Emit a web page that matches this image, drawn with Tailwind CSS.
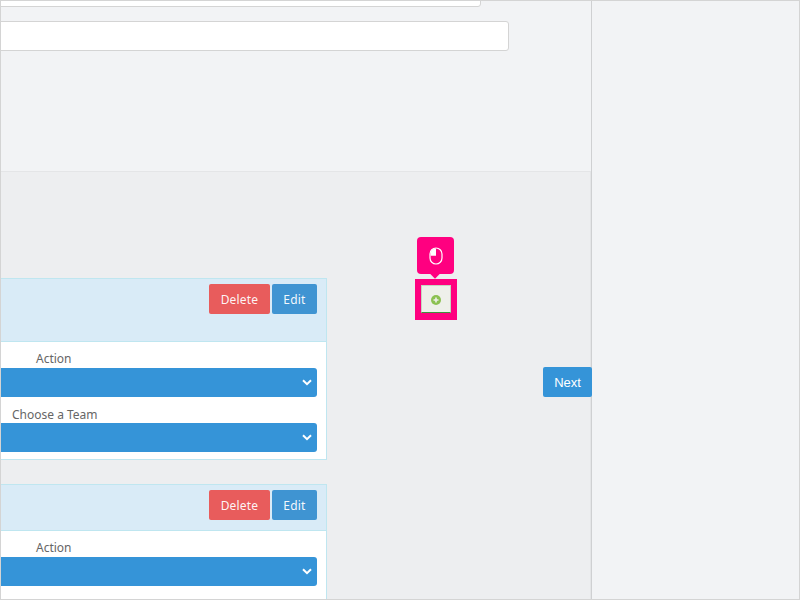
<!DOCTYPE html>
<html>
<head>
<meta charset="utf-8">
<script src="https://cdn.jsdelivr.net/npm/@tailwindcss/browser@4"></script>
</head>
<body class="m-0 bg-[#f2f3f5]">
<div class="relative flex w-[800px] h-[600px] overflow-hidden bg-[#f2f3f5] font-['Noto_Sans','Liberation_Sans',sans-serif]">
  <div class="w-[591px] h-[600px] flex flex-col shrink-0">
    <div class="h-[171px] shrink-0 bg-[#f2f3f5] overflow-hidden">
      <div class="-ml-[10px] w-[491px] h-[7px] bg-white border border-[#d4d4d4] rounded-b-[3px]"></div>
      <div class="-ml-[10px] w-[519px] h-[30px] mt-[14px] bg-white border border-[#d4d4d4] rounded-[3px]"></div>
    </div>
    <div class="relative flex-1 bg-[#edeef0] border-t border-r border-[#e4e5e7] pt-[106px]">
      <section class="w-[327px] h-[182px] bg-white border border-[#bfe6f0] border-l-0">
        <div class="h-[63px] bg-[#d9ebf7] border-b border-[#bfe6f0] flex justify-end gap-[2px] pt-[5px] pr-[9px]">
          <button class="w-[61px] h-[30px] pt-px rounded-[2px] bg-[#e85c5c] text-white/95 text-[12px] tracking-[0.2px]">Delete</button>
          <button class="w-[45px] h-[30px] pt-px rounded-[2px] bg-[#3f94d2] text-white/95 text-[12px] tracking-[0.2px]">Edit</button>
        </div>
        <div class="pr-[9px]">
          <div class="h-[26px] pl-[36px] pt-[9px] text-[12px] leading-[15px] text-[#666]">Action</div>
          <div class="h-[29px] rounded-r-[3px] bg-[#3594d8] flex items-center justify-end pr-[5px]">
            <svg width="10" height="7" viewBox="0 0 10 7" fill="none"><path d="M1 1.2 5 5.2 9 1.2" stroke="#fff" stroke-width="2"/></svg>
          </div>
          <div class="h-[26px] pl-[12px] pt-[10px] text-[12px] leading-[15px] text-[#666]">Choose a Team</div>
          <div class="h-[29px] rounded-r-[3px] bg-[#3594d8] flex items-center justify-end pr-[5px]">
            <svg width="10" height="7" viewBox="0 0 10 7" fill="none"><path d="M1 1.2 5 5.2 9 1.2" stroke="#fff" stroke-width="2"/></svg>
          </div>
        </div>
      </section>
      <section class="w-[327px] h-[200px] mt-[24px] bg-white border border-[#bfe6f0] border-l-0">
        <div class="h-[46px] bg-[#d9ebf7] border-b border-[#bfe6f0] flex justify-end gap-[2px] pt-[5px] pr-[9px]">
          <button class="w-[61px] h-[30px] pt-px rounded-[2px] bg-[#e85c5c] text-white/95 text-[12px] tracking-[0.2px]">Delete</button>
          <button class="w-[45px] h-[30px] pt-px rounded-[2px] bg-[#3f94d2] text-white/95 text-[12px] tracking-[0.2px]">Edit</button>
        </div>
        <div class="pr-[9px]">
          <div class="h-[26px] pl-[36px] pt-[9px] text-[12px] leading-[15px] text-[#666]">Action</div>
          <div class="h-[29px] rounded-r-[3px] bg-[#3594d8] flex items-center justify-end pr-[5px]">
            <svg width="10" height="7" viewBox="0 0 10 7" fill="none"><path d="M1 1.2 5 5.2 9 1.2" stroke="#fff" stroke-width="2"/></svg>
          </div>
        </div>
      </section>

      <!-- tooltip -->
      <div class="absolute left-[417px] top-[65px] w-[37px] h-[37px] rounded-[4px] bg-[#ff0080] flex items-center justify-center">
        <div class="absolute left-[14px] top-[32px] w-[8px] h-[8px] rotate-45 bg-[#ff0080]"></div>
        <svg class="relative" width="14" height="18" viewBox="0 0 14 18" fill="none">
          <rect x="1" y="1" width="12" height="16" rx="6" stroke="#fff" stroke-width="1.2"/>
          <path d="M7 1.6C3.8 1.6 1.6 3.8 1.6 7v1.8H7Z" fill="#fff"/>
        </svg>
      </div>
      <!-- highlighted add button -->
      <div class="absolute left-[415px] top-[107px] w-[42px] h-[41px] border-[6px] border-b-[7px] border-[#ff0080] bg-[#eef0ea]">
        <div class="w-full h-full border border-[#c5d6c0] border-b-[#3f8f3f] flex items-center justify-center pt-[1px]">
          <svg width="10" height="10" viewBox="0 0 10 10"><circle cx="5" cy="5" r="5" fill="#8cc152"/><path d="M5 2.5v5M2.5 5h5" stroke="#eef0ea" stroke-width="1.6"/></svg>
        </div>
      </div>
      <button class="absolute left-[543px] top-[195px] w-[49px] h-[30px] pt-px rounded-[2px] bg-[#3594d8] text-white text-[13px] font-['Liberation_Sans',sans-serif] z-10">Next</button>
    </div>
  </div>
  <aside class="flex-1 border-l border-[#cfd0d2] bg-[#f2f3f5]"></aside>
  <div class="absolute inset-0 border border-[#d4d4d4] pointer-events-none z-20"></div>
</div>
</body>
</html>
